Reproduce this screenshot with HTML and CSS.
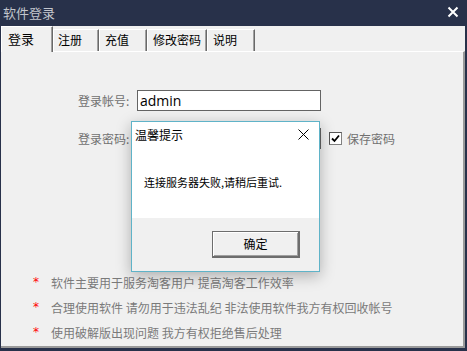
FILE: index.html
```html
<!DOCTYPE html>
<html lang="zh-CN">
<head>
    <meta charset="UTF-8">
    <title>软件登录</title>
    <link rel="stylesheet" href="styles.css">
</head>
<body>
    <div class="window">
        <div class="titlebar">
            <span class="title">软件登录</span>
            <svg class="close" width="12" height="12" viewBox="0 0 12 12">
                <path d="M1.5 1.5 L10.5 10.5 M10.5 1.5 L1.5 10.5" stroke="#fff" stroke-width="2"/>
            </svg>
        </div>
        <div class="frame">
            <div class="tabs">
                <div class="tab active">登录</div>
                <div class="tab t2">注册</div>
                <div class="tab t3">充值</div>
                <div class="tab t4">修改密码</div>
                <div class="tab t5">说明</div>
            </div>
            <div class="panel">
                <div class="form">
                    <div class="row">
                        <label class="label">登录帐号:</label>
                        <div class="input">admin</div>
                    </div>
                    <div class="row">
                        <label class="label">登录密码:</label>
                        <div class="input"></div>
                        <span class="check">
                            <svg width="9" height="9" viewBox="0 0 9 9">
                                <path d="M1 4.5 L3.5 7 L8 1.5" stroke="#000" stroke-width="1.8" fill="none"/>
                            </svg>
                        </span>
                        <span class="check-label">保存密码</span>
                    </div>
                </div>
                <ul class="notes">
                    <li><span class="star">*</span>软件主要用于服务淘客用户 提高淘客工作效率</li>
                    <li><span class="star">*</span>合理使用软件 请勿用于违法乱纪 非法使用软件我方有权回收帐号</li>
                    <li><span class="star">*</span>使用破解版出现问题 我方有权拒绝售后处理</li>
                </ul>
            </div>
        </div>

        <!-- 提示框 -->
        <div class="dialog">
            <div class="dialog-head">
                <span>温馨提示</span>
                <svg width="11" height="11" viewBox="0 0 11 11">
                    <path d="M0.5 0.5 L10.5 10.5 M10.5 0.5 L0.5 10.5" stroke="#000" stroke-width="1"/>
                </svg>
            </div>
            <div class="dialog-body">连接服务器失败,请稍后重试.</div>
            <div class="dialog-foot">
                <div class="button">确定</div>
            </div>
        </div>
    </div>
</body>
</html>
```

FILE: styles.css
```css
body {
    margin: 0;
    font-family: "Noto Sans CJK SC", "Noto Sans", sans-serif;
    font-size: 12px;
}
.window {
    position: relative;
    width: 467px;
    height: 351px;
    background-color: #28314a;
    display: flex;
    flex-direction: column;
}
.titlebar {
    height: 26px;
    display: flex;
    align-items: center;
    justify-content: space-between;
    padding: 0 8px 0 3px;
    color: #c3c6cd;
    font-size: 13px;
    line-height: 26px;
}
.titlebar .close {
    margin-top: -2px;
}
.frame {
    flex: 1;
    margin: 0 2px 3px 1px;
    background-color: #f0f0f0;
    display: flex;
    flex-direction: column;
}
.tabs {
    display: flex;
    align-items: flex-end;
    height: 25px;
}
.tab {
    box-sizing: border-box;
    height: 22px;
    padding-left: 5px;
    line-height: 20px;
    color: #000;
    border-top: 1px solid #fff;
    border-left: 1px solid #fff;
    border-right: 1px solid #696969;
    box-shadow: inset -1px 0 #a0a0a0;
}
.tab.active {
    position: relative;
    z-index: 1;
    width: 52px;
    height: 26px;
    margin-bottom: -1px;
    padding-left: 6px;
    line-height: 24px;
    font-size: 13px;
    background-color: #f0f0f0;
}
.tab.t2 { width: 46px; padding-left: 4px; }
.tab.t3 { width: 48px; }
.tab.t4 { width: 60px; }
.tab.t5 { width: 48px; }
.panel {
    flex: 1;
    display: flex;
    flex-direction: column;
    border-top: 1px solid #fff;
    border-right: 2px solid #9a9a9a;
    border-bottom: 2px solid #9a9a9a;
}
.form {
    padding: 38px 0 0 77px;
    display: flex;
    flex-direction: column;
    gap: 17px;
}
.row {
    display: flex;
    align-items: center;
    height: 21px;
}
.label {
    width: 59px;
    color: #707070;
    font-size: 12px;
}
.input {
    box-sizing: border-box;
    width: 184px;
    height: 21px;
    border: 1px solid #646464;
    background-color: #fff;
    padding-left: 2px;
    font-family: "Open Sans", "Noto Sans", sans-serif;
    font-size: 14px;
    line-height: 19px;
    color: #000;
}
.row .input + .check {
    margin-left: 8px;
}
.check {
    box-sizing: border-box;
    width: 13px;
    height: 13px;
    background-color: #fff;
    border: 1px solid #808080;
    border-top-color: #555;
    border-left-color: #555;
    display: flex;
    align-items: center;
    justify-content: center;
}
.check-label {
    margin-left: 5px;
    color: #707070;
}
.notes {
    list-style: none;
    margin: auto 0 1px 0;
    padding: 0 0 0 32px;
    color: #7a7a7a;
    font-size: 12px;
}
.notes li {
    height: 25px;
    line-height: 25px;
    display: flex;
}
.star {
    width: 18px;
    color: #ff0000;
    font-family: "DejaVu Sans", sans-serif;
    font-size: 12px;
}
.dialog {
    position: absolute;
    left: 131px;
    top: 121px;
    box-sizing: border-box;
    width: 189px;
    height: 151px;
    border: 1px solid #5fb3c8;
    background-color: #fff;
    box-shadow: 0 4px 14px rgba(0, 0, 0, 0.28);
    display: flex;
    flex-direction: column;
}
.dialog-head {
    height: 24px;
    display: flex;
    align-items: center;
    justify-content: space-between;
    padding: 0 10px 0 3px;
    color: #000;
    font-size: 12px;
}
.dialog-body {
    height: 72px;
    padding-left: 12px;
    line-height: 72px;
    font-size: 11px;
    color: #000;
}
.dialog-foot {
    flex: 1;
    background-color: #f0f0f0;
    display: flex;
    justify-content: flex-end;
    align-items: flex-start;
    padding: 13px 19px 0 0;
}
.button {
    box-sizing: border-box;
    width: 88px;
    height: 27px;
    border: 1px solid #6d6d6d;
    border-right-width: 2px;
    border-bottom-width: 2px;
    box-shadow: inset 1px 1px #fff, inset -1px -1px #a0a0a0;
    background-color: #f0f0f0;
    text-align: center;
    line-height: 24px;
    font-size: 12px;
    color: #000;
}
```
